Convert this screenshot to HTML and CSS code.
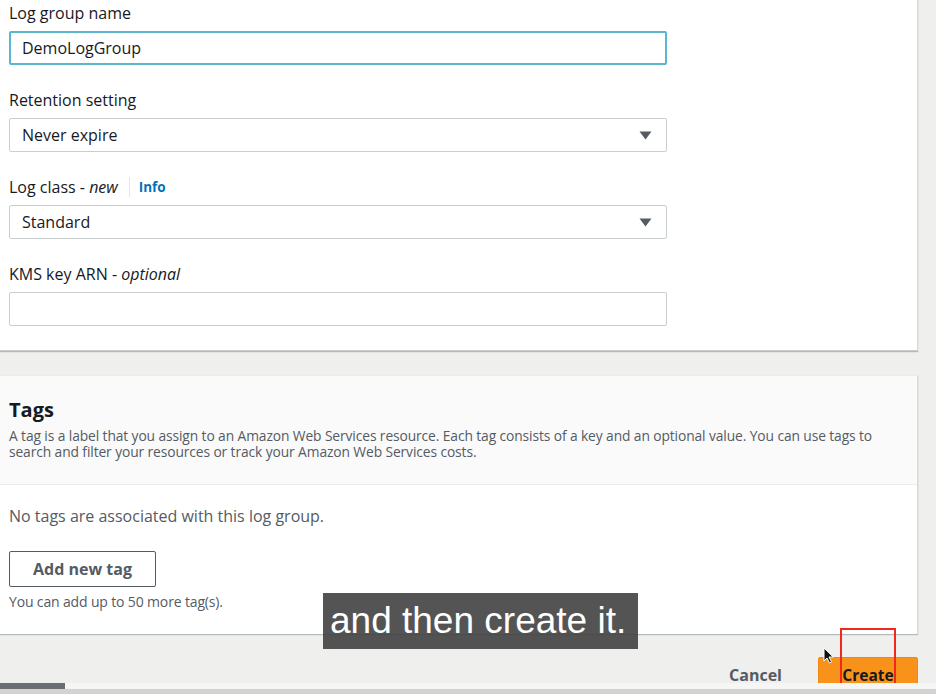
FILE: index.html
```html
<!DOCTYPE html>
<html lang="en">
<head>
<meta charset="utf-8">
<title>Create log group</title>
<link rel="stylesheet" href="styles.css">
</head>
<body>
<div class="page">
  <section class="card settings">
    <div class="field">
      <label class="label">Log group name</label>
      <div class="control input focused">DemoLogGroup</div>
    </div>
    <div class="field">
      <label class="label">Retention setting</label>
      <div class="control select">
        <span>Never expire</span>
        <svg class="caret" width="13" height="9" viewBox="0 0 13 9"><path d="M0.5 0.5h12L6.5 8.5z" fill="#545b64"/></svg>
      </div>
    </div>
    <div class="field">
      <div class="label-row">
        <label class="label">Log class - <i>new</i></label>
        <span class="divider"></span>
        <a class="info">Info</a>
      </div>
      <div class="control select">
        <span>Standard</span>
        <svg class="caret" width="13" height="9" viewBox="0 0 13 9"><path d="M0.5 0.5h12L6.5 8.5z" fill="#545b64"/></svg>
      </div>
    </div>
    <div class="field last">
      <label class="label">KMS key ARN - <i>optional</i></label>
      <div class="control input"></div>
    </div>
  </section>

  <section class="card tags">
    <header class="tags-head">
      <h2>Tags</h2>
      <p>A tag is a label that you assign to an Amazon Web Services resource. Each tag consists of a key and an optional value. You can use tags to search and filter your resources or track your Amazon Web Services costs.</p>
    </header>
    <div class="tags-body">
      <p class="empty">No tags are associated with this log group.</p>
      <button class="btn-normal">Add new tag</button>
      <p class="hint">You can add up to 50 more tag(s).</p>
    </div>
  </section>

  <div class="actions">
    <button class="btn-link">Cancel</button>
    <button class="btn-primary">Create</button>
  </div>
</div>

<div class="subtitle">and then create it.</div>
<div class="highlight"></div>
<svg class="cursor" width="12" height="18" viewBox="0 0 12 18"><path d="M1 1v13l3-3 2.5 5 2-1-2.5-5h4.2z" fill="#111" stroke="#fff" stroke-width="1"/></svg>
<div class="progress"><div class="progress-fill"></div></div>
</body>
</html>
```
FILE: styles.css
```css
html, body {
  margin: 0;
  padding: 0;
  height: 100%;
  overflow: hidden;
}
body {
  background: #efefed;
  font-family: "Open Sans", "Noto Sans", sans-serif;
  color: #16191f;
  position: relative;
}
.page {
  width: 918px;
  display: flex;
  flex-direction: column;
}
.card {
  background: #fff;
  border-right: 1px solid #d5dbdb;
  box-shadow: 0 1px 1px 0 rgba(0, 28, 36, 0.25);
}
.settings {
  padding: 2px 0 24px 9px;
  border-bottom: 1px solid #c6cccc;
}
.field {
  display: flex;
  flex-direction: column;
  gap: 7px;
  margin-bottom: 24px;
}
.field.last { margin-bottom: 0; }
.label {
  font-size: 16px;
  line-height: 22px;
  color: #16191f;
}
.label i { font-style: italic; }
.label-row {
  display: flex;
  align-items: center;
  height: 22px;
}
.divider {
  width: 1px;
  height: 20px;
  background: #e4e7e7;
  margin: 0 9px 0 11px;
}
.info {
  font-size: 13.5px;
  font-weight: 700;
  color: #0073bb;
}
.control {
  box-sizing: border-box;
  width: 658px;
  height: 34px;
  border: 1px solid #c9cfcf;
  border-radius: 2px;
  background: #fff;
  font-size: 16px;
  line-height: 32px;
  padding: 0 12px;
  display: flex;
  align-items: center;
  justify-content: space-between;
  color: #16191f;
}
.control.focused {
  border: 2px solid #5ab5cf;
  padding: 0 11px;
}
.caret { margin-right: 2px; }

.tags {
  margin-top: 24px;
  border-top: 1px solid #eaeded;
}
.tags-head {
  background: #fafafa;
  padding: 22px 30px 24px 9px;
  border-bottom: 1px solid #eaeded;
}
.tags-head h2 {
  margin: 0 0 6px;
  font-size: 20px;
  line-height: 24px;
  font-weight: 700;
  color: #16191f;
}
.tags-head p {
  margin: 0;
  font-size: 13.8px;
  line-height: 16px;
  color: #545b64;
  letter-spacing: -0.1px;
}
.tags-body {
  padding: 20px 0 24px 9px;
  display: flex;
  flex-direction: column;
  align-items: flex-start;
}
.empty {
  margin: 0 0 24px;
  font-size: 16px;
  line-height: 22px;
  color: #545b64;
}
.btn-normal {
  box-sizing: border-box;
  width: 147px;
  height: 36px;
  border: 1px solid #545b64;
  border-radius: 2px;
  background: #fff;
  font-family: inherit;
  font-size: 16px;
  font-weight: 700;
  color: #545b64;
  padding: 0;
}
.hint {
  margin: 7px 0 0;
  font-size: 14px;
  line-height: 16px;
  color: #545b64;
  letter-spacing: -0.15px;
}

.actions {
  display: flex;
  justify-content: flex-end;
  align-items: center;
  margin-top: 23px;
  gap: 16px;
}
.btn-link {
  background: none;
  border: none;
  font-family: inherit;
  font-size: 16px;
  font-weight: 700;
  color: #545b64;
  padding: 0 20px;
  height: 36px;
}
.btn-primary {
  box-sizing: border-box;
  width: 100px;
  height: 36px;
  border: 1px solid #f1880f;
  border-radius: 2px;
  background: #f8921a;
  font-family: inherit;
  font-size: 15.5px;
  font-weight: 700;
  color: #16191f;
  padding: 0;
}

.subtitle {
  position: absolute;
  left: 323px;
  top: 593px;
  width: 315px;
  height: 56px;
  background: rgba(60, 60, 60, 0.88);
  color: #fff;
  font-family: "Liberation Sans", Arial, sans-serif;
  font-size: 37px;
  line-height: 56px;
  padding-left: 7px;
  box-sizing: border-box;
  white-space: nowrap;
}
.highlight {
  position: absolute;
  left: 840px;
  top: 628px;
  width: 56px;
  height: 80px;
  box-sizing: border-box;
  border: 2px solid #f0291c;
}
.cursor {
  position: absolute;
  left: 823px;
  top: 647px;
}
.progress {
  position: absolute;
  left: 0;
  right: 0;
  top: 683px;
  height: 6px;
  background: #f6f6f6;
  border-bottom: 5px solid #d3d3d0;
}
.progress-fill {
  width: 65px;
  height: 6px;
  background: #6a6e75;
}
```
